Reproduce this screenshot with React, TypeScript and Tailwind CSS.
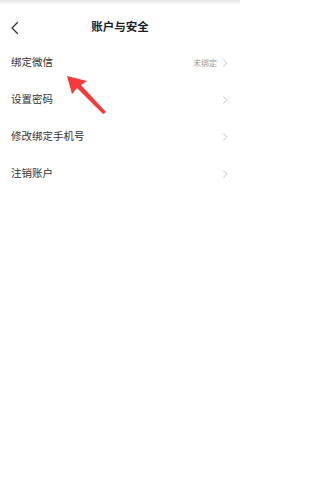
import React from "react";

const rows = [
  { label: "绑定微信", value: "未绑定" },
  { label: "设置密码" },
  { label: "修改绑定手机号" },
  { label: "注销账户" },
];

const Chevron = ({ className }: { className?: string }) => (
  <svg viewBox="0 0 8 12" className={className} fill="none">
    <path d="M2 1.5 6.5 6 2 10.5" stroke="currentColor" strokeWidth="1" strokeLinecap="round" strokeLinejoin="round" />
  </svg>
);

export default function App() {
  return (
    <div
      className="relative w-[240px] h-[480px] bg-white overflow-hidden"
      style={{ fontFamily: '"Noto Sans CJK SC", "Noto Sans", sans-serif' }}
    >
      <div className="h-[5px] bg-gradient-to-b from-[#e6e6e6] to-white" />
      <div className="relative h-[39px] flex items-center justify-center">
        <svg viewBox="0 0 10 14" className="absolute left-[10px] top-[16px] w-[10px] h-[14px] text-[#333]" fill="none">
          <path d="M7.5 1.5 2 7l5.5 5.5" stroke="currentColor" strokeWidth="1.3" strokeLinecap="round" strokeLinejoin="round" />
        </svg>
        <span className="text-[11.5px] font-bold text-[#1b1b2a] leading-none mt-[4px]">账户与安全</span>
      </div>
      <div className="flex flex-col">
        {rows.map((r) => (
          <div key={r.label} className="h-[37px] flex items-center justify-between pl-[11px] pr-[12px]">
            <span className="text-[10.5px] text-[#333] leading-none">{r.label}</span>
            <div className="flex items-center gap-[5px]">
              {r.value && <span className="text-[8px] text-[#999] leading-none">{r.value}</span>}
              <Chevron className="w-[6px] h-[10px] text-[#b5b5b5]" />
            </div>
          </div>
        ))}
      </div>
      <svg className="absolute left-0 top-0 pointer-events-none" width="240" height="480" viewBox="0 0 240 480">
        <polygon points="67,76 87,81 81,85 106,112 103,114 77,88 72,94" fill="#f43a3a" />
      </svg>
    </div>
  );
}
